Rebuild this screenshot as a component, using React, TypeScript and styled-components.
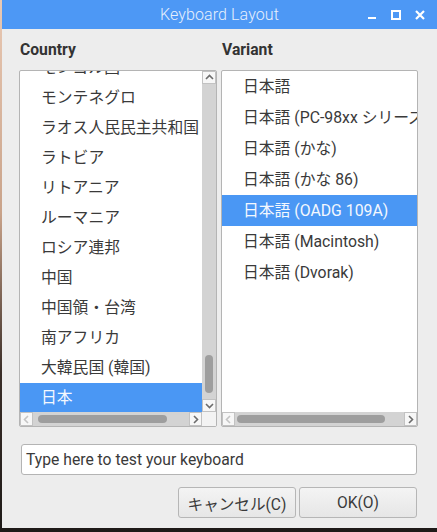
import React, { ReactElement } from 'react';
import styled, { createGlobalStyle } from 'styled-components';

const GlobalStyle = createGlobalStyle`
  html, body {
    margin: 0;
    padding: 0;
    height: 100%;
  }
  body {
    background: linear-gradient(#e9c9b4 0%, #c9a38a 40%, #3a2e28 70%, #1e1a18 100%);
    font-family: Roboto, "Noto Sans CJK JP", sans-serif;
    overflow: hidden;
  }
`;

const Window = styled.div`
  margin-left: 2px;
  width: 435px;
  height: 528px;
  background: #ededed;
  display: flex;
  flex-direction: column;
`;

const TitleBar = styled.div`
  height: 29px;
  background: #4d98f5;
  display: grid;
  grid-template-columns: 1fr auto 1fr;
  align-items: center;
`;

const Title = styled.div`
  grid-column: 2;
  color: #e6effc;
  font-size: 16px;
  font-weight: 300;
  letter-spacing: 0.1px;
`;

const Controls = styled.div`
  grid-column: 3;
  justify-self: end;
  display: flex;
  align-items: center;
  gap: 12px;
  padding-right: 11px;
`;

const ControlIcon = styled.svg`
  width: 12px;
  height: 12px;
  display: block;
`;

const Body = styled.div`
  flex: 1;
  display: flex;
  flex-direction: column;
  padding: 10px 19px 0 17px;
`;

const Columns = styled.div`
  display: grid;
  grid-template-columns: 198px 197px;
  column-gap: 4px;
`;

const Column = styled.div`
  display: flex;
  flex-direction: column;
`;

const Heading = styled.div`
  height: 22px;
  line-height: 22px;
  margin-bottom: 9px;
  padding-left: 1px;
  font-size: 15.7px;
  font-weight: 700;
  color: #333;
`;

const Frame = styled.div<{ $vertical: boolean }>`
  height: 355px;
  border: 1px solid #b4b4b4;
  border-radius: 2px;
  background: #fff;
  display: grid;
  grid-template-columns: ${p => (p.$vertical ? '1fr 14px' : '1fr')};
  grid-template-rows: 1fr 14px;
  overflow: hidden;
`;

const Viewport = styled.div`
  overflow: hidden;
  min-width: 0;
`;

const Items = styled.div``;

const Row = styled.div<{ $selected: boolean; $height: number }>`
  height: ${p => p.$height}px;
  line-height: ${p => p.$height}px;
  padding-left: 21px;
  white-space: nowrap;
  font-size: 15.8px;
  color: ${p => (p.$selected ? '#f4f8fe' : '#3a3a3a')};
  background: ${p => (p.$selected ? '#4a97f4' : 'transparent')};
`;

const Track = styled.div<{ $vertical: boolean }>`
  background: #d3d3d3;
  display: flex;
  flex-direction: ${p => (p.$vertical ? 'column' : 'row')};
  align-items: stretch;
`;

const Corner = styled.div`
  background: #f3f3f3;
`;

const ArrowButton = styled.div`
  flex: 0 0 13px;
  display: flex;
  align-items: center;
  justify-content: center;
  background: #f7f7f7;
  border: 1px solid #c2c2c2;
  box-sizing: border-box;
`;

const Trough = styled.div<{ $vertical: boolean }>`
  flex: 1;
  position: relative;
`;

const Thumb = styled.div<{ $vertical: boolean }>`
  position: absolute;
  background: #9e9e9e;
  border-radius: 5px;
  ${p => (p.$vertical ? 'left: 3px; right: 3px;' : 'top: 3px; bottom: 3px;')}
`;

const Entry = styled.div`
  margin-top: 17px;
  height: 29px;
  border: 1px solid #b4b4b4;
  border-radius: 3px;
  background: #fff;
  display: flex;
  align-items: center;
  padding-left: 4px;
  font-size: 15.7px;
  color: #3a3a3a;
  margin-left: 2px;
  margin-right: 1px;
`;

const ButtonRow = styled.div`
  margin-top: 12px;
  display: flex;
  justify-content: flex-end;
  gap: 3px;
  margin-right: 1px;
`;

const Button = styled.div`
  width: 116px;
  height: 29px;
  border: 1px solid #b6b6b6;
  border-radius: 3px;
  background: linear-gradient(#f4f4f4, #e6e6e6);
  display: flex;
  align-items: center;
  justify-content: center;
  font-size: 15.6px;
  color: #3a3a3a;
`;

type Dir = 'up' | 'down' | 'left' | 'right';

const chevrons: Record<Dir, string> = {
  up: 'M2 7 L5.5 3.5 L9 7',
  down: 'M2 4 L5.5 7.5 L9 4',
  left: 'M7 2 L3.5 5.5 L7 9',
  right: 'M4 2 L7.5 5.5 L4 9',
};

const Arrow = ({ dir, faded }: { dir: Dir; faded?: boolean }): ReactElement => (
  <ArrowButton>
    <svg width="11" height="11" viewBox="0 0 11 11">
      <path d={chevrons[dir]} fill="none" stroke={faded ? '#c4c4c4' : '#6c6c6c'} strokeWidth="1.6" />
    </svg>
  </ArrowButton>
);

interface ScrollbarProps {
  vertical: boolean;
  start: number;
  size: number;
}

const Scrollbar = ({ vertical, start, size }: ScrollbarProps): ReactElement => {
  const thumbStyle = vertical
    ? { top: `${start}%`, height: `${size}%` }
    : { left: `${start}%`, width: `${size}%` };
  return (
    <Track $vertical={vertical}>
      <Arrow dir={vertical ? 'up' : 'left'} faded={!vertical} />
      <Trough $vertical={vertical}>
        <Thumb $vertical={vertical} style={thumbStyle} />
      </Trough>
      <Arrow dir={vertical ? 'down' : 'right'} />
    </Track>
  );
};

const countries = [
  'モンゴル国',
  'モンテネグロ',
  'ラオス人民民主共和国',
  'ラトビア',
  'リトアニア',
  'ルーマニア',
  'ロシア連邦',
  '中国',
  '中国領・台湾',
  '南アフリカ',
  '大韓民国 (韓国)',
  '日本',
];

const variants = [
  '日本語',
  '日本語 (PC-98xx シリーズ)',
  '日本語 (かな)',
  '日本語 (かな 86)',
  '日本語 (OADG 109A)',
  '日本語 (Macintosh)',
  '日本語 (Dvorak)',
];

const App = (): ReactElement => {
  return (
    <>
      <GlobalStyle />
      <Window>
        <TitleBar>
          <Title>Keyboard Layout</Title>
          <Controls>
            <ControlIcon viewBox="0 0 12 12">
              <rect x="2" y="8" width="8" height="2" fill="#fff" />
            </ControlIcon>
            <ControlIcon viewBox="0 0 12 12">
              <rect x="2" y="2" width="8" height="8" fill="none" stroke="#fff" strokeWidth="2" />
            </ControlIcon>
            <ControlIcon viewBox="0 0 12 12">
              <path d="M2 2 L10 10 M10 2 L2 10" stroke="#fff" strokeWidth="2.2" />
            </ControlIcon>
          </Controls>
        </TitleBar>
        <Body>
          <Columns>
            <Column>
              <Heading>Country</Heading>
              <Frame $vertical>
                <Viewport>
                  <Items style={{ marginTop: -18 }}>
                    {countries.map(c => (
                      <Row key={c} $height={30} $selected={c === '日本'}>{c}</Row>
                    ))}
                  </Items>
                </Viewport>
                <Scrollbar vertical start={86} size={12} />
                <Scrollbar vertical={false} start={3} size={83} />
                <Corner />
              </Frame>
            </Column>
            <Column>
              <Heading>Variant</Heading>
              <Frame $vertical={false}>
                <Viewport>
                  <Items>
                    {variants.map(v => (
                      <Row key={v} $height={31} $selected={v === '日本語 (OADG 109A)'}>{v}</Row>
                    ))}
                  </Items>
                </Viewport>
                <Scrollbar vertical={false} start={1} size={88} />
              </Frame>
            </Column>
          </Columns>
          <Entry>Type here to test your keyboard</Entry>
          <ButtonRow>
            <Button>キャンセル(C)</Button>
            <Button>OK(O)</Button>
          </ButtonRow>
        </Body>
      </Window>
    </>
  );
};

export default App;
